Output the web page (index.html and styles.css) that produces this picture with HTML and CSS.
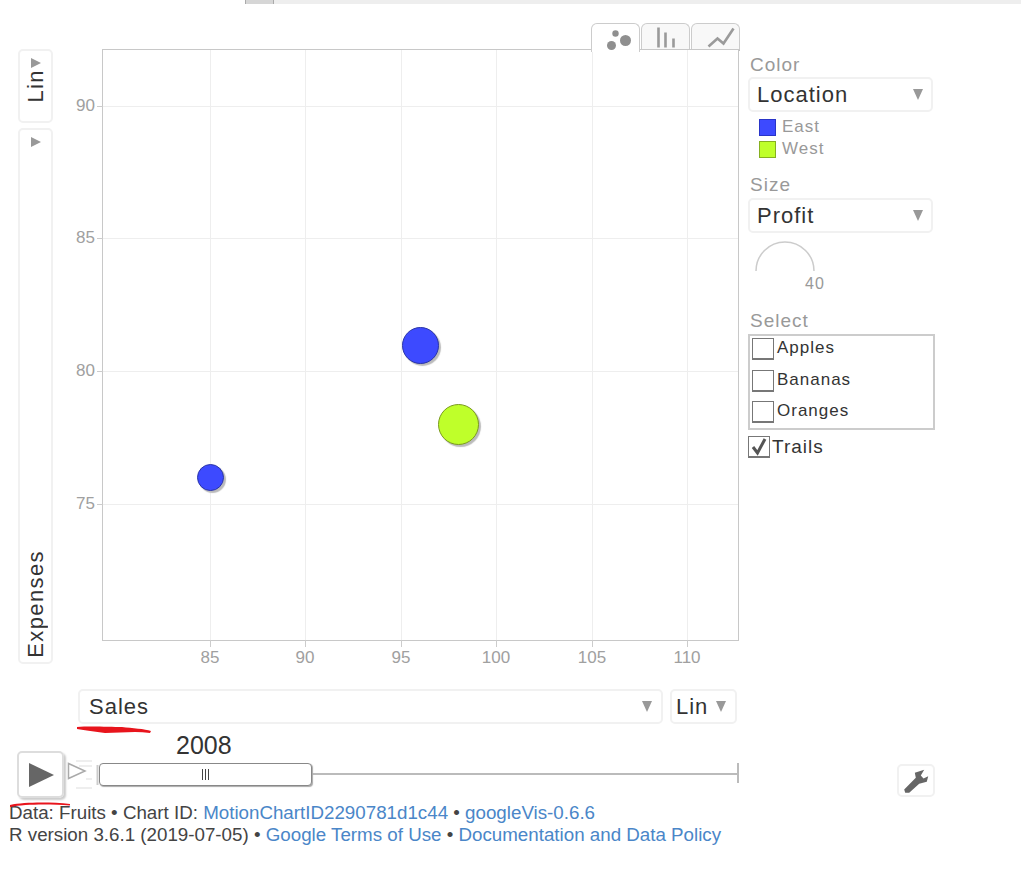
FILE: index.html
```html
<!DOCTYPE html>
<html lang="en">
<head>
<meta charset="utf-8">
<title>Motion Chart</title>
<link rel="stylesheet" href="styles.css">
</head>
<body>
<div class="topbar"><div class="topbar-thumb"></div></div>

<div class="chart-row">
  <div class="y-controls">
    <div class="axis-btn y-scale"><span class="tri-right"></span><span class="vtext">Lin</span></div>
    <div class="axis-btn y-name"><span class="tri-right"></span><span class="vtext">Expenses</span></div>
  </div>

  <div class="plot-col">
    <div class="tabs">
      <div class="tab tab-active">
        <svg width="30" height="24" viewBox="0 0 30 24"><circle cx="14.500" cy="7.500" r="3.200" fill="#8f8f8f"/><circle cx="24.500" cy="14.500" r="5.500" fill="#8f8f8f"/><circle cx="10.500" cy="19.500" r="4.500" fill="#8f8f8f"/></svg>
      </div>
      <div class="tab">
        <svg width="30" height="24" viewBox="0 0 30 24"><path d="M7.500 2.500V22.500M14.500 7.500V22.500M22.500 13.500V22.500" stroke="#9a9a9a" stroke-width="2.600" fill="none"/></svg>
      </div>
      <div class="tab">
        <svg width="38" height="24" viewBox="0 0 38 24"><path d="M11.500 21.500L20.500 13.500L26.500 18.500L36.500 3.500" stroke="#9a9a9a" stroke-width="2.600" fill="none"/></svg>
      </div>
    </div>
    <div class="plot">
      <i class="grid-v" style="left:107px"></i><i class="grid-v" style="left:202px"></i><i class="grid-v" style="left:298px"></i><i class="grid-v" style="left:393px"></i><i class="grid-v" style="left:489px"></i><i class="grid-v" style="left:584px"></i>
      <i class="grid-h" style="top:56px"></i><i class="grid-h" style="top:188px"></i><i class="grid-h" style="top:321px"></i><i class="grid-h" style="top:454px"></i>
      <span class="y-tick" style="top:46px">90</span><span class="y-tick" style="top:178px">85</span><span class="y-tick" style="top:311px">80</span><span class="y-tick" style="top:444px">75</span>
      <span class="x-tick" style="left:107px">85</span><span class="x-tick" style="left:202px">90</span><span class="x-tick" style="left:298px">95</span><span class="x-tick" style="left:393px">100</span><span class="x-tick" style="left:489px">105</span><span class="x-tick" style="left:584px">110</span>
      <div class="bubble east" style="left:299px;top:277px;width:37px;height:37px"></div>
      <div class="bubble west" style="left:335px;top:354px;width:41px;height:41px"></div>
      <div class="bubble east" style="left:94px;top:414px;width:27px;height:27px"></div>
    </div>
    <div class="x-controls">
      <div class="select x-name"><span>Sales</span><span class="tri-down"></span></div>
      <div class="select x-scale"><span>Lin</span><span class="tri-down"></span></div>
    </div>
  </div>

  <aside class="side">
    <div class="side-label">Color</div>
    <div class="select side-select color-select"><span>Location</span><span class="tri-down"></span></div>
    <ul class="legend">
      <li><i class="swatch swatch-east"></i>East</li>
      <li><i class="swatch swatch-west"></i>West</li>
    </ul>
    <div class="side-label size-label">Size</div>
    <div class="select side-select"><span>Profit</span><span class="tri-down"></span></div>
    <div class="size-dial">
      <svg width="62" height="32" viewBox="0 0 62 32"><path d="M2 31A29 29 0 0 1 60 31" fill="none" stroke="#ccc" stroke-width="1.500"/></svg>
      <span class="size-num">40</span>
    </div>
    <div class="side-label select-label">Select</div>
    <div class="select-box">
      <div class="check-row"><i class="check"></i>Apples</div>
      <div class="check-row"><i class="check"></i>Bananas</div>
      <div class="check-row"><i class="check"></i>Oranges</div>
    </div>
    <div class="trails"><i class="check check-on"><svg width="20" height="20" viewBox="0 0 20 20"><path d="M4 10L8.500 16L16 2" fill="none" stroke="#555" stroke-width="3"/></svg></i>Trails</div>
  </aside>
</div>

<div class="year">2008</div>
<div class="time-row">
  <div class="play"><span class="play-tri"></span></div>
  <svg class="speed" width="32" height="34" viewBox="0 0 32 34"><path d="M9 4H25M12 9H25M19 22H25M9 31H25" stroke="#ddd" stroke-width="1"/><path d="M1.500 6.500L18 14L1.500 21.500Z" fill="#fff" stroke="#aaa" stroke-width="1.500"/><path d="M30.500 8V28" stroke="#ccc" stroke-width="2"/></svg>
  <div class="track">
    <div class="handle"><span class="grip"></span></div>
    <div class="track-line"></div>
    <div class="track-end"></div>
  </div>
  <div class="wrench">
    <svg width="30" height="26" viewBox="0 0 30 26"><path d="M3.200 21.500L14.800 9.800L13.800 4.800L23.200 1.800L19.800 7.500L22.500 10.500L27.200 8.200L25.800 13.800L18.200 15.800L8.200 24.800L4.200 24.800Z" fill="#666"/></svg>
  </div>
</div>

<footer class="foot">
  <p>Data: Fruits • Chart ID: <a href="#">MotionChartID2290781d1c44</a> • <a href="#">googleVis-0.6.6</a></p>
  <p>R version 3.6.1 (2019-07-05) • <a href="#">Google Terms of Use</a> • <a href="#">Documentation and Data Policy</a></p>
</footer>

<svg class="scribble" width="1021" height="884" viewBox="0 0 1021 884">
  <path d="M77 727C90 726 110 727 122 727C132 728 145 729 151 731L150 733C135 731 120 733 105 733C95 732 85 730 77 729Z" fill="#e8141c"/>
  <path d="M10 805C25 802 50 802 70 804L70 805.500C50 804 25 804 10 807Z" fill="#e8141c"/>
</svg>
</body>
</html>
```
FILE: styles.css
```css
* { box-sizing: border-box; }
html, body { margin: 0; padding: 0; background: #fff; }
body { position: relative; width: 1021px; height: 884px; overflow: hidden; font-family: "Liberation Sans", Arial, sans-serif; color: #333; }

.topbar { height: 4px; margin-left: 245px; background: #eee; }
.topbar-thumb { width: 29px; height: 4px; background: #d6d6d6; border-left: 1px solid #aaa; border-right: 1px solid #aaa; }

.chart-row { display: flex; align-items: flex-start; padding: 19px 0 0 18px; }

.y-controls { width: 35px; margin-top: 26px; display: flex; flex-direction: column; gap: 5px; }
.axis-btn { border: 2px solid #f1f1f1; border-radius: 5px; display: flex; flex-direction: column; align-items: center; justify-content: space-between; padding: 7px 0 4px; }
.y-scale { height: 74px; justify-content: flex-start; gap: 1px; }
.y-name { height: 536px; }
.vtext { writing-mode: vertical-rl; transform: rotate(180deg); font-size: 22px; letter-spacing: 1.400px; line-height: 24px; }
.tri-right { width: 0; height: 0; border-left: 10px solid #999; border-top: 5.500px solid transparent; border-bottom: 5.500px solid transparent; }
.tri-down { width: 0; height: 0; border-top: 11px solid #999; border-left: 5.500px solid transparent; border-right: 5.500px solid transparent; }

.plot-col { width: 638px; margin-left: 49px; }
.tabs { display: flex; justify-content: flex-end; gap: 1px; height: 28px; }
.tab { width: 49px; height: 28px; border: 1px solid #ccc; border-bottom: 2px solid #bbb; border-radius: 6px 6px 0 0; background: #f8f8f8; display: flex; align-items: center; justify-content: center; }
.tab svg { flex: none; }
.tab-active { position: relative; z-index: 1; background: #fff; border-bottom: 0; height: 29px; }

.plot { position: relative; width: 637px; height: 592px; margin-top: -2px; border: 1px solid #c8c8c8; background: #fff; }
.grid-v { position: absolute; top: 0; bottom: 0; width: 1px; background: #eee; }
.grid-h { position: absolute; left: 0; right: 0; height: 1px; background: #eee; }
.grid-v::after { content: ""; position: absolute; top: 100%; left: 0; width: 1px; height: 7px; background: #ccc; }
.grid-h::before { content: ""; position: absolute; right: 100%; top: 0; width: 6px; height: 1px; background: #ccc; }
.y-tick { position: absolute; right: 100%; margin-right: 8px; font-size: 17px; color: #a0a0a0; line-height: 20px; }
.x-tick { position: absolute; top: 100%; margin-top: 8px; width: 40px; margin-left: -20px; text-align: center; font-size: 17px; color: #a0a0a0; line-height: 20px; }
.bubble { position: absolute; border-radius: 50%; box-shadow: 2px 2px 1px #bbb; }
.east { background: #3d4aff; border: 1px solid #2a35a8; }
.west { background: #bfff2a; border: 1px solid #7b9a20; }

.select { display: flex; align-items: center; justify-content: space-between; height: 35px; border: 2px solid #f1f1f1; border-radius: 5px; background: #fff; font-size: 22px; letter-spacing: 1px; color: #333; }
.x-controls { display: flex; gap: 7px; margin-top: 48px; margin-left: -24px; }
.x-name { width: 585px; padding: 0 9px; }
.x-scale { width: 67px; padding: 0 9px 0 4px; }

.side { width: 186px; margin: 31px 0 0 8px; }
.side-label { font-size: 19px; letter-spacing: 1px; color: #999; line-height: 22px; padding-left: 2px; }
.side-select { width: 185px; padding: 0 8px 0 7px; }
.color-select { margin-top: 1px; }
.legend { list-style: none; margin: 4px 0 0 11px; padding: 0; font-size: 17px; letter-spacing: 1px; color: #999; }
.legend li { display: flex; align-items: center; height: 22px; }
.swatch { width: 17px; height: 17px; margin-right: 6px; border: 1px solid; }
.swatch-east { background: #3d4aff; border-color: #2a35c8; }
.swatch-west { background: #bfff2a; border-color: #86b020; }
.size-label { margin-top: 14px; margin-bottom: 2px; }
.size-dial { position: relative; height: 50px; margin-left: 6px; padding-top: 7px; }
.size-dial svg { display: block; }
.size-num { position: absolute; left: 51px; top: 41px; font-size: 16px; letter-spacing: 1px; color: #999; line-height: 20px; }
.select-label { margin-top: 27px; }
.select-box { width: 187px; height: 96px; margin-top: 2px; padding: 2px 0 0 2px; border: 2px solid #ccc; }
.check-row { display: flex; align-items: flex-start; height: 31.500px; font-size: 17px; letter-spacing: 1px; line-height: 20px; color: #333; }
.check { display: block; flex: none; width: 22px; height: 22px; margin-right: 3px; border: 1.500px solid #777; border-bottom-width: 2px; background: #fff; }
.trails { display: flex; align-items: center; height: 22px; margin-top: 6px; font-size: 19px; letter-spacing: 1px; color: #333; }
.check-on { margin-right: 2px; padding: 0; }
.check-on svg { display: block; }

.year { margin: 8px 0 0 176px; font-size: 25px; line-height: 28px; color: #333; height: 28px; position: absolute; top: 723px; }
.time-row { display: flex; align-items: flex-start; position: absolute; top: 751px; left: 17px; }
.play { width: 47px; height: 47px; border: 2px solid #ddd; border-radius: 5px; box-shadow: 2px 2px 2px #ccc; display: flex; align-items: center; justify-content: center; }
.play-tri { width: 0; height: 0; margin-left: 2px; border-left: 25px solid #666; border-top: 12.500px solid transparent; border-bottom: 12.500px solid transparent; }
.speed { flex: none; margin: 6px 0 0 3px; }
.track { position: relative; width: 640px; height: 30px; margin-top: 10px; display: flex; align-items: center; }
.handle { position: absolute; z-index: 1; left: 0; top: 2px; width: 213px; height: 23px; border: 1px solid #888; border-radius: 4px; background: #fff; box-shadow: 1px 1px 1px #aaa; display: flex; align-items: center; justify-content: center; }
.grip { width: 7px; height: 11px; border-left: 1px solid #444; border-right: 1px solid #444; background: linear-gradient(#444,#444) center/1px 100% no-repeat; }
.track-line { position: absolute; left: 200px; top: 12px; width: 439px; height: 2px; background: #bbb; }
.track-end { position: absolute; left: 638px; top: 2px; width: 2px; height: 20px; background: #bbb; }
.wrench { flex: none; width: 38px; height: 33px; margin: 13px 0 0 158px; border: 2px solid #f1f1f1; border-radius: 5px; display: flex; align-items: center; justify-content: center; }

.foot { position: absolute; top: 802px; left: 9px; font-size: 18.750px; line-height: 22px; color: #444; }
.foot p { margin: 0; }
.foot a { color: #4a86c8; text-decoration: none; }

.scribble { position: absolute; left: 0; top: 0; pointer-events: none; }
```
